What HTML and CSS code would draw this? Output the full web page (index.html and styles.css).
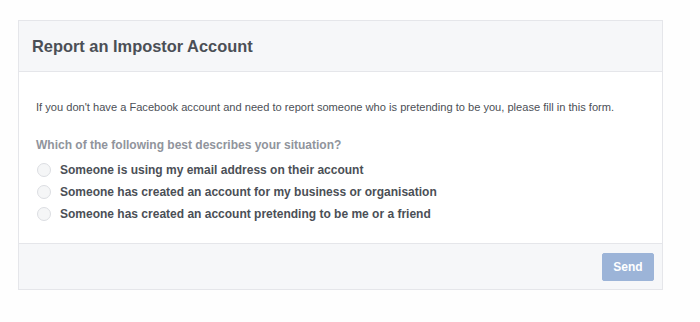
FILE: index.html
```html
<!DOCTYPE html>
<html lang="en">
<head>
    <meta charset="UTF-8">
    <title>Report an Impostor Account</title>
    <link rel="stylesheet" href="styles.css">
</head>
<body>
    <div class="panel">
        <div class="panel-header">
            <h2>Report an Impostor Account</h2>
        </div>

        <div class="panel-body">
            <p class="intro">If you don't have a Facebook account and need to report someone who is pretending to be you, please fill in this form.</p>

            <div class="question">Which of the following best describes your situation?</div>
            <ul class="options">
                <li><span class="radio"></span>Someone is using my email address on their account</li>
                <li><span class="radio"></span>Someone has created an account for my business or organisation</li>
                <li><span class="radio"></span>Someone has created an account pretending to be me or a friend</li>
            </ul>
        </div>

        <div class="panel-footer">
            <button class="send-btn" disabled>Send</button>
        </div>
    </div>
</body>
</html>
```

FILE: styles.css
```css
body {
    font-family: "Liberation Sans", Arial, sans-serif;
    margin: 0;
    padding: 20px 0 0 18px;
    background-color: #fefefe;
    color: #4b4f56;
}
.panel {
    width: 643px;
    border: 1px solid #e5e6ea;
    background: #fff;
}
.panel-header {
    background: #f6f7f9;
    border-bottom: 1px solid #e5e6ea;
    height: 50px;
    padding: 0 13px;
    display: flex;
    align-items: center;
}
.panel-header h2 {
    margin: 0;
    font-size: 16.4px;
    font-weight: bold;
    color: #4b4f56;
}
.panel-body {
    padding: 29px 17px 16px;
    height: 126px;
}
.intro {
    margin: 0 0 25px;
    font-size: 11.1px;
    color: #4b4f56;
}
.question {
    font-size: 12px;
    font-weight: bold;
    color: #90949c;
    margin-bottom: 7px;
}
.options {
    list-style: none;
    margin: 0;
    padding: 0;
}
.options li {
    display: flex;
    align-items: center;
    height: 22px;
    font-size: 12px;
    font-weight: bold;
    color: #4b4f56;
}
.radio {
    width: 12px;
    height: 12px;
    border: 1px solid #dcdee2;
    border-radius: 50%;
    background: #f5f6f7;
    margin: 0 9px 0 1px;
}
.panel-footer {
    background: #f6f7f9;
    border-top: 1px solid #e5e6ea;
    height: 45px;
    display: flex;
    align-items: center;
    justify-content: flex-end;
    padding: 0 8px;
}
.send-btn {
    background: #9cb4d8;
    border: 1px solid #9cb4d8;
    color: #fff;
    font-family: inherit;
    font-size: 12px;
    font-weight: bold;
    width: 52px;
    height: 28px;
    border-radius: 2px;
}
```
